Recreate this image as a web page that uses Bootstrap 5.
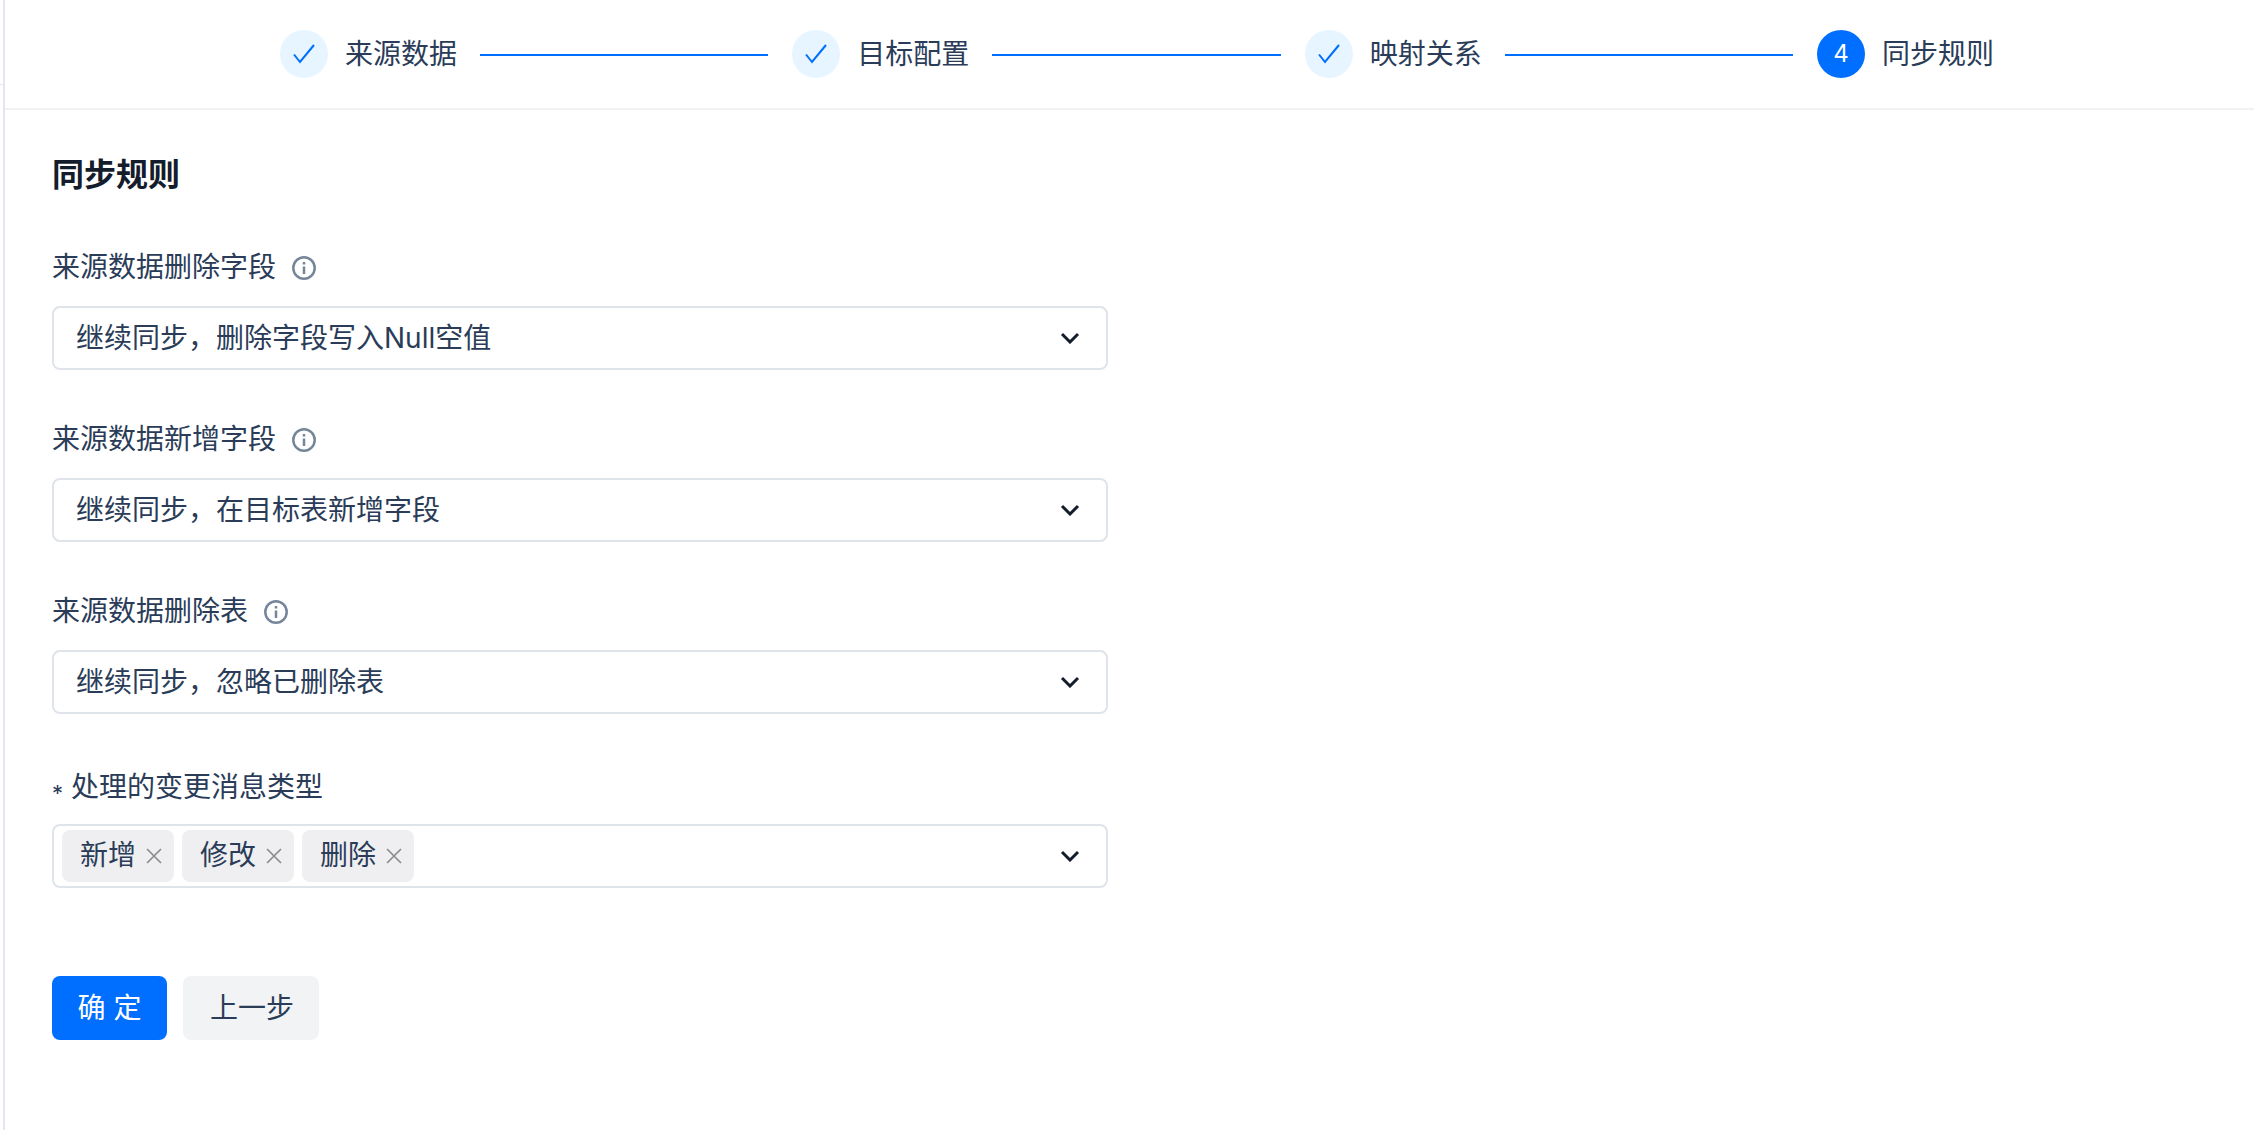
<!DOCTYPE html>
<html lang="zh">
<head>
<meta charset="utf-8">
<title>同步规则</title>
<link href="https://cdn.jsdelivr.net/npm/bootstrap@5.3.0/dist/css/bootstrap.min.css" rel="stylesheet">
<style>
html,body{height:100%;}
body{background:#fff;color:#2a3c58;font-family:Inter,"Noto Sans CJK SC",sans-serif;font-size:28px;line-height:1.4;overflow:hidden;}
.shell{min-height:1130px;}
.rail{width:3px;flex:none;}
.rail-tick{height:85px;border-bottom:1px solid #e5e7eb;}
.main-pane{border-left:2px solid #e3e6ec;}
.stepper{height:110px;border-bottom:2px solid #f2f2f3;padding:0 260px 0 275px;}
.step-dot{width:48px;height:48px;flex:none;border-radius:50%;background:#e6f5ff;color:#006eff;}
.step-dot.is-current{background:#006eff;color:#fff;font-size:24px;}
.step-name{margin:0 23px 0 17px;padding-top:2px;white-space:nowrap;}
.step-name.is-last{margin-right:0;}
.step-line{flex:1;height:2px;margin:2px 24px 0 0;background:#006eff;}
.sync-form{padding:43px 0 0 47px;width:1103px;}
.form-heading{font-size:32px;line-height:44px;font-weight:600;color:#141d2b;margin:0 0 50px;}
.field-block{margin-bottom:49px;}
.field-block.before-tags{margin-bottom:51px;}
.field-block.is-tags{margin-bottom:88px;}
.field-title{display:flex;align-items:center;height:40px;margin-bottom:19px;padding-top:2px;}
.is-tags .field-title{padding-top:5px;}
.hint-icon{margin-left:15px;}
.req{font-size:22px;margin-right:8px;line-height:1;padding-top:10px;}
.fake-select{height:64px;border:2px solid #dfe3ea;border-radius:8px;padding:0 26px 0 22px;background:#fff;}
.fake-select.has-tags{padding-left:8px;}
.select-value{padding-top:2px;}
.tag-chip{height:52px;padding:0 12px 0 18px;margin-right:8px;background:#efeff1;border-radius:8px;gap:10px;}
.action-btn{height:64px;padding:0 25px 0 27px;font-size:28px;line-height:1;border-radius:8px;border:0;}
.action-btn.btn-primary{background:#006eff;color:#fff;padding:0 25.5px;}
.action-btn.btn-light{background:#f1f3f5;color:#2a3c58;}
</style>
</head>
<body>
<div class="shell d-flex">
  <div class="rail"><div class="rail-tick"></div></div>
  <div class="main-pane flex-grow-1">
    <div class="stepper d-flex align-items-center">
      <span class="step-dot d-flex align-items-center justify-content-center"><svg width="22" height="20" viewBox="0 0 22 20" fill="none" stroke="currentColor" stroke-width="2"><path d="M1 10.500 7 18 21 1"/></svg></span>
      <span class="step-name">来源数据</span><span class="step-line"></span>
      <span class="step-dot d-flex align-items-center justify-content-center"><svg width="22" height="20" viewBox="0 0 22 20" fill="none" stroke="currentColor" stroke-width="2"><path d="M1 10.500 7 18 21 1"/></svg></span>
      <span class="step-name">目标配置</span><span class="step-line"></span>
      <span class="step-dot d-flex align-items-center justify-content-center"><svg width="22" height="20" viewBox="0 0 22 20" fill="none" stroke="currentColor" stroke-width="2"><path d="M1 10.500 7 18 21 1"/></svg></span>
      <span class="step-name">映射关系</span><span class="step-line"></span>
      <span class="step-dot is-current d-flex align-items-center justify-content-center">4</span>
      <span class="step-name is-last">同步规则</span>
    </div>
    <div class="sync-form">
      <h2 class="form-heading">同步规则</h2>

      <div class="field-block">
        <div class="field-title">来源数据删除字段<svg class="hint-icon" width="26" height="26" viewBox="0 0 26 26" fill="none" stroke="#75859a" stroke-width="2.500"><circle cx="13" cy="13" r="10.700"/><path d="M13 11.500V19M13 7v2.500"/></svg></div>
        <div class="fake-select d-flex align-items-center justify-content-between"><span class="select-value">继续同步，删除字段写入Null空值</span><svg width="20" height="12" viewBox="0 0 20 12" fill="none" stroke="#141d2b" stroke-width="3"><path d="M2 2l8 8 8-8"/></svg></div>
      </div>

      <div class="field-block">
        <div class="field-title">来源数据新增字段<svg class="hint-icon" width="26" height="26" viewBox="0 0 26 26" fill="none" stroke="#75859a" stroke-width="2.500"><circle cx="13" cy="13" r="10.700"/><path d="M13 11.500V19M13 7v2.500"/></svg></div>
        <div class="fake-select d-flex align-items-center justify-content-between"><span class="select-value">继续同步，在目标表新增字段</span><svg width="20" height="12" viewBox="0 0 20 12" fill="none" stroke="#141d2b" stroke-width="3"><path d="M2 2l8 8 8-8"/></svg></div>
      </div>

      <div class="field-block before-tags">
        <div class="field-title">来源数据删除表<svg class="hint-icon" width="26" height="26" viewBox="0 0 26 26" fill="none" stroke="#75859a" stroke-width="2.500"><circle cx="13" cy="13" r="10.700"/><path d="M13 11.500V19M13 7v2.500"/></svg></div>
        <div class="fake-select d-flex align-items-center justify-content-between"><span class="select-value">继续同步，忽略已删除表</span><svg width="20" height="12" viewBox="0 0 20 12" fill="none" stroke="#141d2b" stroke-width="3"><path d="M2 2l8 8 8-8"/></svg></div>
      </div>

      <div class="field-block is-tags">
        <div class="field-title"><span class="req">*</span>处理的变更消息类型</div>
        <div class="fake-select has-tags d-flex align-items-center justify-content-between">
          <div class="d-flex align-items-center">
            <span class="tag-chip d-flex align-items-center">新增<svg width="16" height="16" viewBox="0 0 16 16" fill="none" stroke="#8c8c8c" stroke-width="1.700"><path d="M1 1l14 14M15 1 1 15"/></svg></span>
            <span class="tag-chip d-flex align-items-center">修改<svg width="16" height="16" viewBox="0 0 16 16" fill="none" stroke="#8c8c8c" stroke-width="1.700"><path d="M1 1l14 14M15 1 1 15"/></svg></span>
            <span class="tag-chip d-flex align-items-center">删除<svg width="16" height="16" viewBox="0 0 16 16" fill="none" stroke="#8c8c8c" stroke-width="1.700"><path d="M1 1l14 14M15 1 1 15"/></svg></span>
          </div>
          <svg width="20" height="12" viewBox="0 0 20 12" fill="none" stroke="#141d2b" stroke-width="3"><path d="M2 2l8 8 8-8"/></svg>
        </div>
      </div>

      <div class="d-flex gap-3">
        <button type="button" class="btn btn-primary action-btn">确 定</button>
        <button type="button" class="btn btn-light action-btn">上一步</button>
      </div>
    </div>
  </div>
</div>
<script src="https://cdn.jsdelivr.net/npm/bootstrap@5.3.0/dist/js/bootstrap.bundle.min.js"></script>
</body>
</html>
